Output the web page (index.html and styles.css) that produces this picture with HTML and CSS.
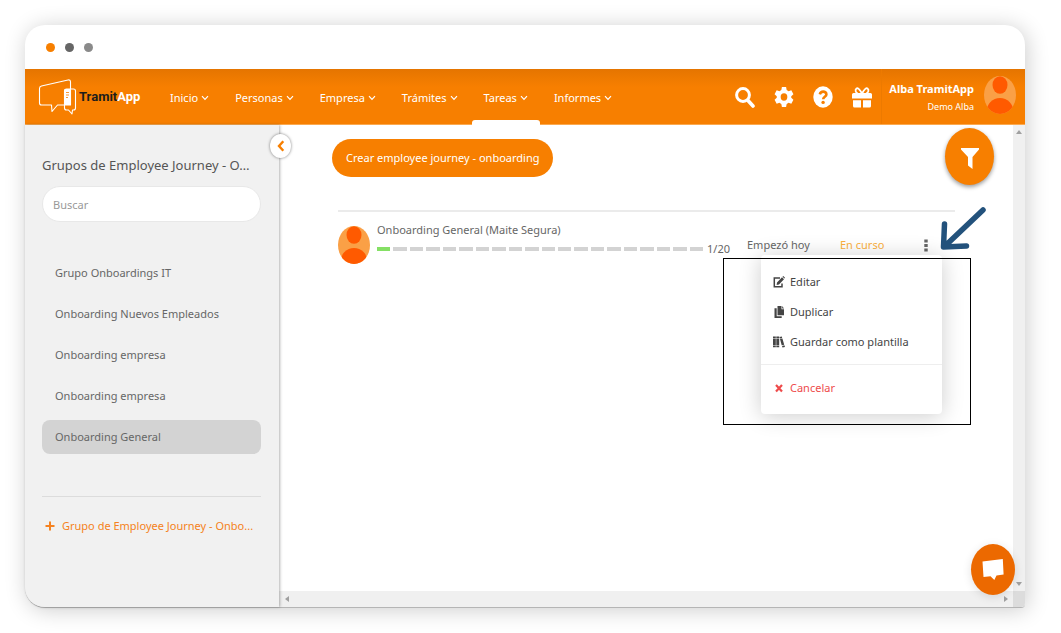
FILE: index.html
```html
<!DOCTYPE html>
<html lang="es">
<head>
<meta charset="utf-8">
<title>TramitApp - Tareas</title>
<link rel="stylesheet" href="styles.css">
</head>
<body>
<svg class="sprite" aria-hidden="true">
  <symbol id="chevron" viewBox="0 0 8 6"><path d="M1 1.2 4 4.3 7 1.2" fill="none" stroke="currentColor" stroke-width="1.2"/></symbol>
  <symbol id="person" viewBox="0 0 32 38" preserveAspectRatio="none">
    <clipPath id="oval"><ellipse cx="16" cy="19" rx="16" ry="19"/></clipPath>
    <g clip-path="url(#oval)"><rect width="32" height="38" fill="#faa046"/><ellipse cx="16" cy="9" rx="7.5" ry="8.8" fill="#ff5a00"/><ellipse cx="16" cy="36" rx="13.5" ry="14" fill="#ff5a00"/></g>
  </symbol>
</svg>
<div class="window">
  <div class="titlebar"><span class="dot dot-orange"></span><span class="dot dot-dark"></span><span class="dot"></span></div>
  <header class="header">
    <a class="logo" href="#">
      <svg class="logo-mark" viewBox="0 0 39 36" fill="none" stroke="#fff" stroke-width="1.1" stroke-linejoin="round">
        <path d="M26 26H19.500L14 32.500 13.500 26H3.500Q1.500 26 1.500 24V9.500Q1.500 7.500 3.500 7L30 1Q32.500.500 32.500 3V10"/>
        <path d="M28.500 10H35.500Q37.500 10 37.500 12V29Q37.500 31 35.500 31H34.500L34 35 30.500 31H28.500Q26.500 31 26.500 29V12Q26.500 10 28.500 10Z"/>
        <path d="M27 10.500H32.500V26H27Z" fill="#fff"/>
        <path d="M28 13.500H31M28 16H31M28 18.500H30" stroke="#f77f00" stroke-width=".8"/>
      </svg>
      <span class="logo-name">Tramit<span class="logo-app">App</span></span>
    </a>
    <nav class="nav">
      <a href="#">Inicio<svg><use href="#chevron"/></svg></a>
      <a href="#">Personas<svg><use href="#chevron"/></svg></a>
      <a href="#">Empresa<svg><use href="#chevron"/></svg></a>
      <a href="#">Trámites<svg><use href="#chevron"/></svg></a>
      <a class="active" href="#">Tareas<svg><use href="#chevron"/></svg></a>
      <a href="#">Informes<svg><use href="#chevron"/></svg></a>
    </nav>
    <div class="tools">
      <button aria-label="Buscar"><svg viewBox="0 0 20 22" preserveAspectRatio="none"><circle cx="8" cy="9" r="6.400" fill="none" stroke="#fff" stroke-width="3"/><path d="m13 14.500 5 5.500" stroke="#fff" stroke-width="3.600" stroke-linecap="round"/></svg></button>
      <button aria-label="Ajustes"><svg viewBox="0 0 24 24" preserveAspectRatio="none"><path fill="#fff" fill-rule="evenodd" d="M9.500 1h5l.7 3.400 2.300 1.300 3.300-1.100 2.500 4.300-2.600 2.300v1.600l2.600 2.300-2.500 4.300-3.300-1.100-2.300 1.300-.7 3.400h-5l-.7-3.400-2.300-1.300-3.300 1.100L.7 15.100l2.600-2.300v-1.600L.7 8.900l2.500-4.300 3.300 1.100 2.300-1.300zM12 8a4 4 0 1 0 0 8 4 4 0 0 0 0-8z"/></svg></button>
      <button aria-label="Ayuda"><svg viewBox="0 0 20 22" preserveAspectRatio="none"><ellipse cx="10" cy="11" rx="9.700" ry="10.700" fill="#fff"/><path d="M6.800 8.300C7.400 6.200 8.600 5.600 10.200 5.600c1.800 0 3.200 1.100 3.200 2.800 0 2.400-3.200 2.400-3.200 4.800" fill="none" stroke="#f77f00" stroke-width="2.600"/><circle cx="10.100" cy="16.400" r="1.700" fill="#f77f00"/></svg></button>
      <button aria-label="Novedades"><svg viewBox="0 0 20 22" preserveAspectRatio="none"><path d="M1.500 7H18.500Q20 7 20 8.500V12.500H0V8.500Q0 7 1.500 7ZM1 14.200H9V21.500H2.500Q1 21.500 1 20ZM11 14.200H19V20Q19 21.500 17.500 21.500H11Z" fill="#fff"/><path d="M10 7.500C7.500 2.500 5.500 1.800 4.500 2.500 2.500 4 4 7.500 6 7.500M10 7.500C12.500 2.500 14.500 1.800 15.500 2.500 17.500 4 16 7.500 14 7.500" fill="none" stroke="#fff" stroke-width="1.800"/></svg></button>
    </div>
    <div class="user">
      <div class="user-text"><strong>Alba TramitApp</strong><span>Demo Alba</span></div>
      <svg class="avatar"><use href="#person"/></svg>
    </div>
  </header>
  <div class="body">
    <aside class="sidebar">
      <h2>Grupos de Employee Journey - O…</h2>
      <input class="search" type="text" placeholder="Buscar" aria-label="Buscar">
      <nav class="groups">
        <a href="#">Grupo Onboardings IT</a>
        <a href="#">Onboarding Nuevos Empleados</a>
        <a href="#">Onboarding empresa</a>
        <a href="#">Onboarding empresa</a>
        <a class="selected" href="#">Onboarding General</a>
      </nav>
      <a class="add-group" href="#"><svg viewBox="0 0 10 10"><path d="M5 .5V9.500M.5 5H9.500" stroke="currentColor" stroke-width="2"/></svg>Grupo de Employee Journey - Onbo...</a>
      <button class="collapse" aria-label="Contraer"><svg viewBox="0 0 8 12"><path d="M6.300 1.200 2 6 6.300 10.800" fill="none" stroke="#f77f00" stroke-width="2.400"/></svg></button>
    </aside>
    <main class="main">
      <section class="content">
        <button class="create">Crear employee journey - onboarding</button>
        <article class="journey">
          <svg class="avatar"><use href="#person"/></svg>
          <div class="progress">
            <h3>Onboarding General (Maite Segura)</h3>
            <div class="steps">
              <i class="done"></i><i></i><i></i><i></i><i></i><i></i><i></i><i></i><i></i><i></i><i></i><i></i><i></i><i></i><i></i><i></i><i></i><i></i><i></i><i></i>
            </div>
          </div>
          <span class="count">1/20</span>
          <span class="started">Empezó hoy</span>
          <span class="status">En curso</span>
          <div class="more">
            <button class="more-button" aria-label="Opciones"><svg viewBox="0 0 4 13"><path d="M.3.500h3.400v3H.300zM.300 5h3.400v3H.300zM.300 9.500h3.400v3H.300z" fill="#666"/></svg></button>
            <div class="menu">
              <button><svg viewBox="0 0 12 12"><path d="M7 2H1.300V10.800H9V7.500" fill="none" stroke="currentColor" stroke-width="1.500"/><path d="M4 6.500 9 1.300 11 3.200 6 8.500 3.600 9ZM9.500.700 10.300 0 12 1.700 11.400 2.500Z" fill="currentColor"/></svg>Editar</button>
              <button><svg viewBox="0 0 12 12"><path d="M4.500 0H8.500V3.300H11V9.300H4.500ZM9.200 0 11 2.500H9.200ZM1.500 2.200H3.700V10.200H8.700V12H1.500Z" fill="currentColor"/></svg>Duplicar</button>
              <button><svg viewBox="0 0 12 12"><path d="M0 .500H2.800V2H0ZM0 2.500H2.800V9H0ZM0 9.600H2.800V11.300H0ZM3.300.500H6.200V2H3.300ZM3.300 2.500H6.200V9H3.300ZM3.300 9.600H6.200V11.300H3.300ZM6.500 1 8.800.400 9.200 2 7 2.500ZM7 3 9.400 2.400 11.200 8.700 8.700 9.300ZM9 10 11.400 9.300 12 10.900 9.500 11.500Z" fill="currentColor"/></svg>Guardar como plantilla</button>
              <hr>
              <button class="danger"><svg viewBox="0 0 12 12"><path d="M3 3 9 9.500M9 3 3 9.500" stroke="currentColor" stroke-width="2.200"/></svg>Cancelar</button>
            </div>
            <div class="highlight"></div>
            <svg class="arrow" viewBox="0 0 46 44" fill="none" stroke="#23527c" stroke-width="5.500" stroke-linecap="round" stroke-linejoin="round"><path d="M43 3 5 39M4.500 17 3.500 40 26.500 39"/></svg>
          </div>
        </article>
        <button class="filter" aria-label="Filtrar"><svg viewBox="0 0 18 21" preserveAspectRatio="none"><path d="M0 0H18V1.500L11.500 9V21L7 17.500V9L0 1.500Z" fill="#fff"/></svg></button>
      </section>
      <div class="track-y"><svg viewBox="0 0 6 4"><path d="M0 4 3 0 6 4Z"/></svg><svg viewBox="0 0 6 4"><path d="M0 0 3 4 6 0Z"/></svg></div>
      <div class="track-x"><svg viewBox="0 0 4 6"><path d="M4 0 0 3 4 6Z"/></svg><svg viewBox="0 0 4 6"><path d="M0 0 4 3 0 6Z"/></svg></div>
      <div class="corner"></div>
      <button class="chat" aria-label="Chat"><svg viewBox="0 0 22 21"><path d="M.5 2.500 20.800 0 21.600 15.500 14.500 16.500 12.300 21 8.500 17.200 1.500 18Z" fill="#fff"/></svg></button>
    </main>
  </div>
</div>
</body>
</html>
```
FILE: styles.css
```css
* { box-sizing: border-box; }
body {
  margin: 0;
  min-height: 100vh;
  padding: 25px 36px 25px 25px;
  display: flex;
  background: #fff;
  color: #666;
  font: 11px/18px "Noto Sans", sans-serif;
}
button, input { font: inherit; color: inherit; border: 0; padding: 0; background: none; }
a { color: inherit; text-decoration: none; }
h2, h3 { margin: 0; font-weight: 400; }
svg { display: block; flex: none; }
.sprite { position: absolute; width: 0; height: 0; }

.window {
  flex: 1;
  min-width: 0;
  display: flex;
  flex-direction: column;
  background: #fff;
  border-bottom: 1px solid #b5b5b5;
  border-radius: 20px 20px 4px 20px;
  box-shadow: 2px 2px 22px rgba(0, 0, 0, .2);
}
.titlebar { display: flex; align-items: center; gap: 10px; height: 44px; padding: 1px 21px 0; }
.dot { width: 9px; height: 9px; border-radius: 50%; background: #8a8a8a; }
.dot-orange { background: #f77f00; }
.dot-dark { background: #666; }

.header {
  display: flex;
  align-items: stretch;
  height: 56px;
  padding: 0 9px 0 13px;
  color: #fff;
  background: linear-gradient(#e57500, #f77f00 18px);
  border-bottom: 1px solid #fba94f;
}
.logo { display: flex; align-items: center; width: 120px; }
.logo-mark { width: 39px; height: 36px; }
.logo-name { margin-left: 2px; font: 700 13px/18px Roboto, sans-serif; color: #1d1d1b; }
.logo-app { color: #fff; }
.nav { display: flex; gap: 2px; }
.nav a { display: flex; align-items: center; gap: 3px; padding: 3px 12px 0; }
.nav svg { width: 8px; height: 6px; }
.nav .active { position: relative; }
.nav .active::after {
  content: "";
  position: absolute;
  inset: auto 0 -1px;
  height: 5px;
  border-radius: 3px 3px 0 0;
  background: #fff;
}
.tools { display: flex; align-items: center; gap: 19px; margin-left: auto; padding-right: 9px; border-right: 1px solid #ed7a00; }
.tools svg { width: 20px; height: 22px; }
.user { display: flex; align-items: center; gap: 10px; padding: 0 0 4px 7px; }
.user-text { display: flex; flex-direction: column; padding-top: 7px; text-align: right; }
.user-text span { font-size: 9px; }
.avatar { width: 32px; height: 38px; }

.body { flex: 1; display: flex; }
.sidebar {
  position: relative;
  z-index: 1;
  width: 254px;
  padding: 30px 18px 30px 17px;
  background: #f1f1f1;
  border-radius: 0 0 0 20px;
  box-shadow: 1px 0 3px rgba(0, 0, 0, .3);
}
.sidebar h2 { font-size: 13px; line-height: 20px; white-space: nowrap; color: #555; }
.search {
  width: 100%;
  height: 36px;
  margin-top: 11px;
  padding: 0 10px;
  border: 1px solid #e8e8e8;
  border-radius: 18px;
  background: #fff;
}
.search::placeholder { color: #999; opacity: 1; }
.groups { display: flex; flex-direction: column; gap: 7px; margin-top: 34px; padding-bottom: 42px; border-bottom: 1px solid #dcdcdc; }
.groups a { padding: 8px 13px; border-radius: 8px; }
.groups .selected { background: #d3d3d3; }
.add-group { display: flex; align-items: center; gap: 7px; margin-top: 20px; padding-left: 3px; color: #f58220; white-space: nowrap; }
.add-group svg { width: 10px; height: 10px; }
.collapse {
  position: absolute;
  top: 9px;
  right: -12px;
  display: grid;
  place-items: center;
  width: 21px;
  height: 24px;
  border-radius: 50%;
  background: #fff;
  box-shadow: 0 0 3px rgba(0, 0, 0, .5);
}
.collapse svg { width: 8px; height: 12px; }

.main { position: relative; flex: 1; display: grid; grid-template: 1fr 16px / 1fr 12px; }
.content { position: relative; padding: 14px 58px 14px 53px; }
.create { height: 38px; padding: 0 14px; border-radius: 19px; color: #fff; background: #f77f00; white-space: nowrap; }
.journey {
  display: flex;
  align-items: center;
  margin: 33px 0 0 6px;
  padding-top: 9px;
  border-top: 2px solid #ebebeb;
}
.progress { flex: 1; margin: 0 4px 0 7px; }
.progress h3 { font-size: 11px; line-height: 18px; }
.steps { display: flex; gap: 3px; margin: 8px 0 18px; }
.steps i { flex: 1; height: 4px; background: #d3d3d3; }
.steps .done { background: #85e065; }
.count { width: 40px; padding-top: 8px; }
.started { width: 93px; }
.status { width: 80px; color: #fbb040; }
.more { position: relative; width: 35px; }
.more-button { display: grid; place-items: center; width: 12px; height: 20px; }
.more-button svg { width: 4px; height: 13px; }
.menu {
  position: absolute;
  top: 20px;
  right: 13px;
  display: flex;
  flex-direction: column;
  width: 181px;
  padding: 12px 0 11px;
  border-radius: 4px;
  background: #fff;
  box-shadow: 0 2px 22px rgba(0, 0, 0, .2);
  color: #444;
}
.menu button { display: flex; align-items: center; gap: 5px; height: 30px; padding: 0 12px; white-space: nowrap; }
.menu svg { width: 12px; height: 12px; }
.menu hr { width: 100%; margin: 7px 0 8px; border: 0; border-top: 1px solid #eee; }
.menu .danger { color: #ee4b4b; }
.highlight { position: absolute; top: 23px; right: -16px; width: 248px; height: 167px; border: 1px solid #000; pointer-events: none; }
.arrow { position: absolute; top: -28px; right: -31px; width: 46px; height: 44px; }

.filter, .chat { position: absolute; display: grid; place-items: center; border-radius: 50%; }
.filter { top: 3px; right: 19px; width: 49px; height: 57px; padding-top: 4px; background: #f77f00; box-shadow: 0 2px 4px rgba(0, 0, 0, .4); }
.filter svg { width: 18px; height: 21px; }
.chat { right: 10px; bottom: 12px; width: 44px; height: 51px; background: #ec6900; box-shadow: 0 2px 10px rgba(0, 0, 0, .12); }
.chat svg { width: 22px; height: 21px; }
.track-x, .track-y { display: flex; justify-content: space-between; align-items: center; background: #f0f0f0; fill: #a0a0a0; }
.track-y { flex-direction: column; padding: 5px 0; }
.track-x { padding: 0 5px 0 6px; }
.track-y svg { width: 6px; height: 4px; }
.track-x svg { width: 4px; height: 6px; }
.corner { background: #dcdcdc; border-radius: 0 0 4px 0; }
```
